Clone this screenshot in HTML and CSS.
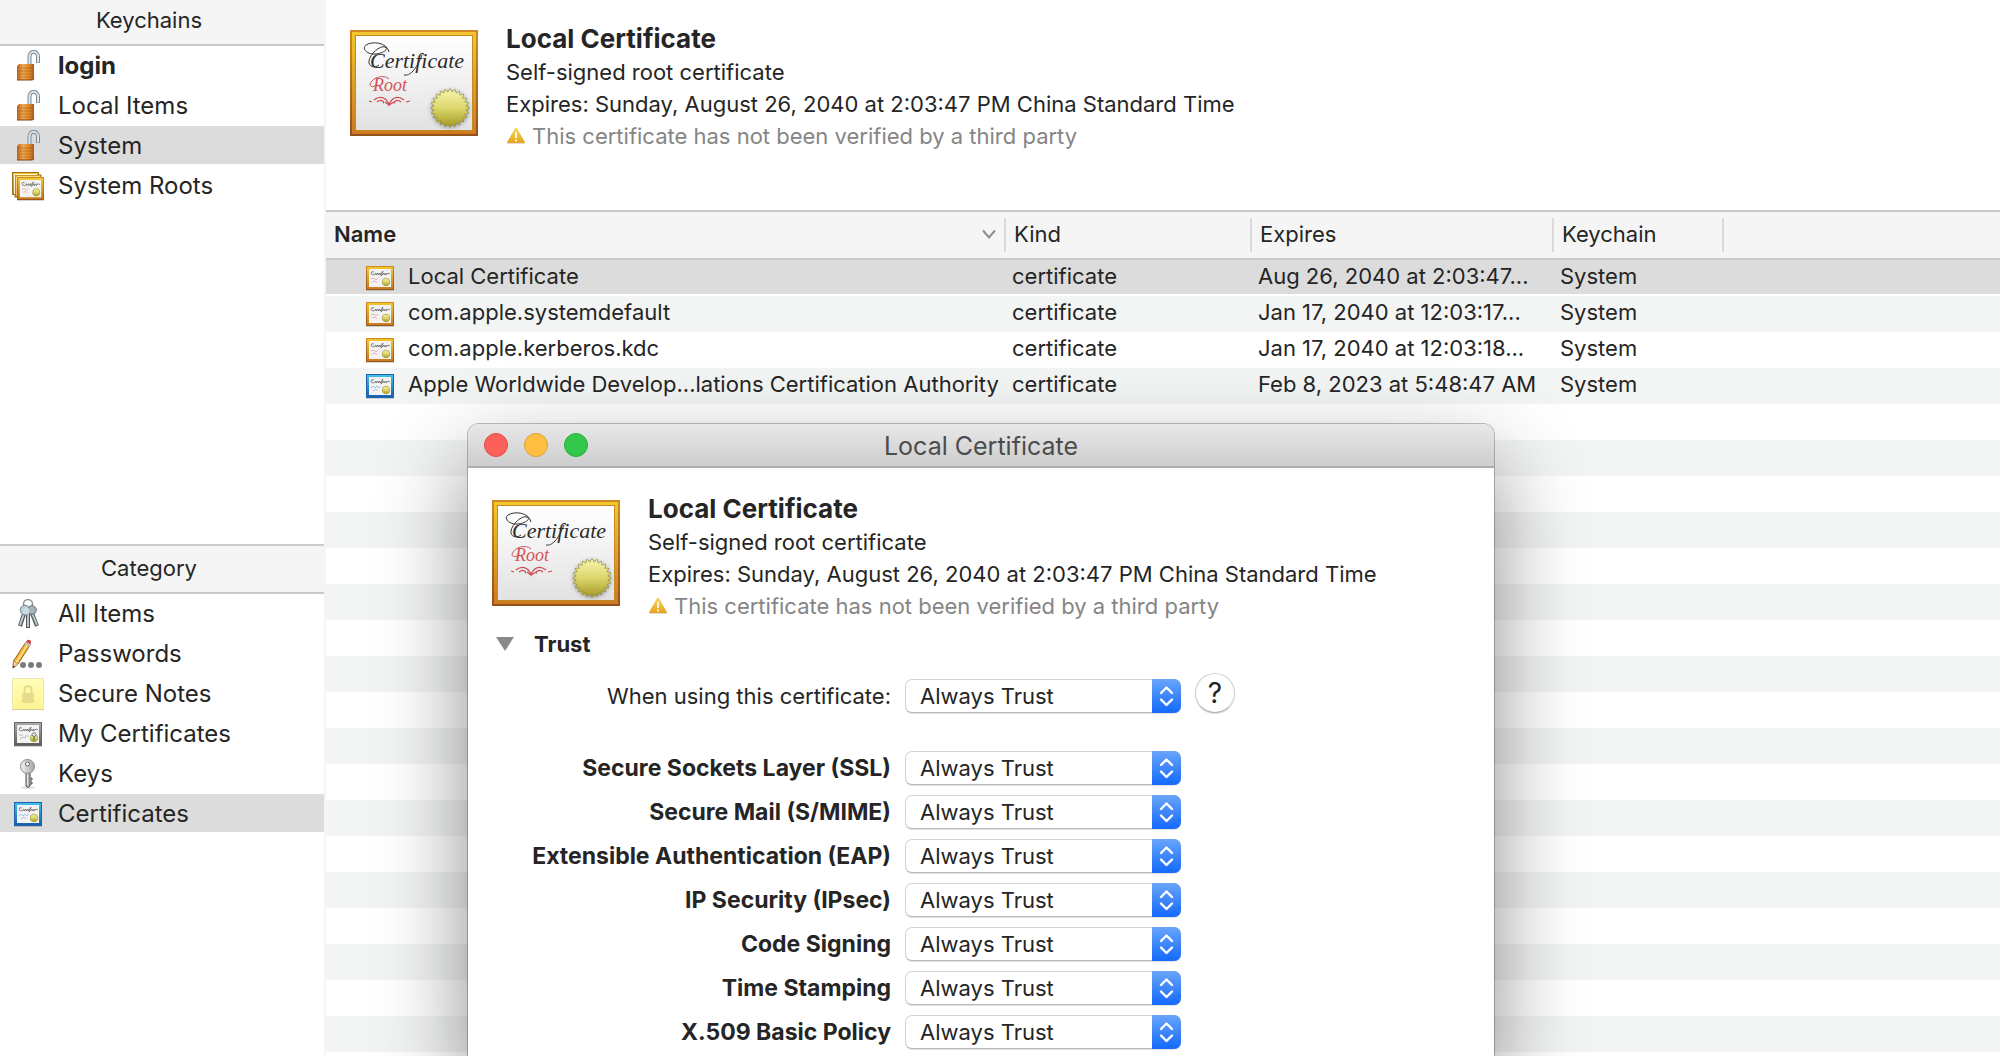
FILE: index.html
```html
<!DOCTYPE html>
<html lang="en">
<head>
<meta charset="utf-8">
<title>Keychain Access</title>
<link rel="stylesheet" href="styles.css">
</head>
<body>
<svg class="defs" aria-hidden="true">
  <defs>
    <linearGradient id="gold" x1="0" y1="0" x2="0" y2="1"><stop offset="0" stop-color="#f2c72e"/><stop offset="1" stop-color="#cc7a20"/></linearGradient>
    <linearGradient id="gold-edge" x1="0" y1="0" x2="0" y2="1"><stop offset="0" stop-color="#d08a20"/><stop offset="1" stop-color="#96501a"/></linearGradient>
    <linearGradient id="blue" x1="0" y1="0" x2="0" y2="1"><stop offset="0" stop-color="#3fc0ea"/><stop offset="1" stop-color="#1a5fb0"/></linearGradient>
    <linearGradient id="grey" x1="0" y1="0" x2="0" y2="1"><stop offset="0" stop-color="#a8a8a8"/><stop offset="1" stop-color="#5e5e5e"/></linearGradient>
    <linearGradient id="paper" x1="0" y1="0" x2="0" y2="1"><stop offset="0" stop-color="#ffffff"/><stop offset="1" stop-color="#e2e2e2"/></linearGradient>
    <linearGradient id="seal" x1="0" y1="0" x2="0" y2="1"><stop offset="0" stop-color="#f8f6ae"/><stop offset=".5" stop-color="#dcd66c"/><stop offset="1" stop-color="#a39a22"/></linearGradient>
    <linearGradient id="brass" x1="0" y1="0" x2="1" y2="0"><stop offset="0" stop-color="#b8651c"/><stop offset=".35" stop-color="#f0a950"/><stop offset=".75" stop-color="#d98526"/><stop offset="1" stop-color="#a65a18"/></linearGradient>
    <linearGradient id="amber" x1="0" y1="0" x2="0" y2="1"><stop offset="0" stop-color="#f8dc5c"/><stop offset="1" stop-color="#e8a01c"/></linearGradient>
    <linearGradient id="note" x1="0" y1="0" x2="0" y2="1"><stop offset="0" stop-color="#fffdb8"/><stop offset="1" stop-color="#fdf491"/></linearGradient>
    <linearGradient id="steel" x1="0" y1="0" x2="1" y2="0"><stop offset="0" stop-color="#f4f4f4"/><stop offset="1" stop-color="#a2a6a8"/></linearGradient>
    <clipPath id="star">
      <path d="M0 -20L17.300 10H-17.300Z"/>
      <path d="M0 -20L17.300 10H-17.300Z" transform="rotate(15)"/>
      <path d="M0 -20L17.300 10H-17.300Z" transform="rotate(30)"/>
      <path d="M0 -20L17.300 10H-17.300Z" transform="rotate(45)"/>
      <path d="M0 -20L17.300 10H-17.300Z" transform="rotate(60)"/>
      <path d="M0 -20L17.300 10H-17.300Z" transform="rotate(75)"/>
      <path d="M0 -20L17.300 10H-17.300Z" transform="rotate(90)"/>
      <path d="M0 -20L17.300 10H-17.300Z" transform="rotate(105)"/>
    </clipPath>
    <symbol id="certificate" viewBox="0 0 128 106">
      <rect width="128" height="106" fill="url(#gold-edge)"/>
      <rect x="2" y="2" width="124" height="102" fill="url(#gold)"/>
      <rect x="5" y="5" width="118" height="96" fill="#c68a22"/>
      <rect x="6" y="6" width="116" height="94" fill="url(#paper)"/>
      <text x="20" y="38" class="script">Certificate</text>
      <path d="M39 22C37 12 22 11 16 15C11 19 18 25 26 24C34 23 39 19 35 17C30 15 20 24 19 31C18 36 24 39 29 35M54 45C60 46 66 40 72 25" fill="none" stroke="#333" stroke-width="1"/>
      <text x="23" y="61" class="script script-root">Root</text>
      <path d="M39 49C34 44 23 47 20 54C20 58 25 57 27 54" fill="none" stroke="#d2545a" stroke-width="1"/>
      <path d="M24 70C29 66 36 66 39 75C42 66 49 66 54 70M27 72C32 68 35 73 33 73M51 72C46 68 43 73 45 73M35 72L39 75L44 72M19 71L22 72M56 72L60 71" fill="none" stroke="#cf4a50" stroke-width="1.2"/>
      <g class="seal-shadow"><g transform="translate(100 78)"><rect x="-20" y="-20" width="40" height="40" fill="#8f8a2c" clip-path="url(#star)"/><g transform="scale(.95)"><rect x="-20" y="-20" width="40" height="40" fill="url(#seal)" clip-path="url(#star)"/></g></g></g>
    </symbol>
    <symbol id="face" viewBox="0 0 28 24">
      <rect x="3" y="3" width="22" height="18" fill="#f3f3f3"/>
      <path d="M8 6Q5 5 5 7T8 9L10 7L10 9L12 7V9L14 7V9L17 5L15 10L18 7V9L20 7V9L22 7L24 8" fill="none" stroke="#666" stroke-width=".8"/>
    </symbol>
    <symbol id="cert-gold" viewBox="0 0 28 25">
      <rect y="23" width="28" height="2" fill="#000" opacity=".15"/>
      <rect width="28" height="24" fill="url(#gold-edge)"/><rect x="1" y="1" width="26" height="22" fill="url(#gold)"/>
      <use href="#face" width="28" height="24"/>
      <path d="M5 13L8 12L10 14L12 12M6 16L9 15L11 17" fill="none" stroke="#eeb0b0" stroke-width="1"/>
      <circle cx="20" cy="16" r="3.8" fill="url(#seal)" stroke="#aba23a" stroke-width=".8"/>
    </symbol>
    <symbol id="cert-blue" viewBox="0 0 28 25">
      <rect y="23" width="28" height="2" fill="#000" opacity=".15"/>
      <rect width="28" height="24" fill="#1b64ad"/><rect x="1" y="1" width="26" height="22" fill="url(#blue)"/>
      <use href="#face" width="28" height="24"/>
      <path d="M5 14L7 12L9 14L11 12L13 14L15 12M7 17L10 15L12 17" fill="none" stroke="#9cc4e6" stroke-width="1"/>
      <circle cx="20" cy="16" r="3.8" fill="url(#seal)" stroke="#aba23a" stroke-width=".8"/>
    </symbol>
    <symbol id="cert-grey" viewBox="0 0 28 25">
      <rect y="23" width="28" height="2" fill="#000" opacity=".15"/>
      <rect width="28" height="24" fill="#666"/><rect x="1" y="1" width="26" height="22" fill="url(#grey)"/>
      <use href="#face" width="28" height="24"/>
      <path d="M5 13H9M11 14H15M6 17L9 15L12 16" fill="none" stroke="#bbb" stroke-width="1"/>
      <circle cx="20" cy="16" r="3.8" fill="url(#seal)" stroke="#aba23a" stroke-width=".8"/>
      <circle cx="20" cy="12.500" r="2" fill="#ddd" stroke="#777" stroke-width=".8"/><path d="M20 14V18.500" stroke="#777" stroke-width="1.500"/>
    </symbol>
    <symbol id="padlock" viewBox="0 0 32 32">
      <path d="M17.500 15V7C17.500 0 26 0 26 7V13" fill="none" stroke="#7d8b95" stroke-width="4"/>
      <path d="M17.500 15V7C17.500 0 26 0 26 7V12.500" fill="none" stroke="#dce5ea" stroke-width="2"/>
      <path d="M5 16L7 14H22V29L20 30L5 30Z" fill="url(#brass)"/>
      <path d="M5 18H22M5 21H22M5 24H22M5 27H22" stroke="#a85d17" stroke-width="1" opacity=".55"/>
      <path d="M5 30H20L22 29" fill="none" stroke="#7d4310" stroke-width="1"/>
    </symbol>
    <symbol id="warning" viewBox="0 0 20 18">
      <path d="M9 1.500Q10 0 11 1.500L19 15.500Q19 17 18 17H2Q1 17 1 15.500Z" fill="#b9b9b9" opacity=".5"/>
      <path d="M9 1.500Q10 0 11 1.500L18.500 14.500Q19 16 18 16H2Q1 16 1.500 14.500Z" fill="url(#amber)"/>
      <path d="M10 5V11M10 12.500V14.500" stroke="#fff8d8" stroke-width="2"/>
    </symbol>
    <symbol id="updown" viewBox="0 0 29 34">
      <path d="M9 14L14.500 8.500L20 14M9 20.500L14.500 26L20 20.500" fill="none" stroke="#fff" stroke-width="2.400" stroke-linecap="round" stroke-linejoin="round"/>
    </symbol>
  </defs>
</svg>

<div class="app">
  <aside class="sidebar">
    <section class="keychains">
      <h2 class="side-head">Keychains</h2>
      <ul>
        <li><a href="#login" class="bold"><svg class="ico"><use href="#padlock"/></svg>login</a></li>
        <li><a href="#local"><svg class="ico"><use href="#padlock"/></svg>Local Items</a></li>
        <li><a href="#system" class="selected" aria-current="true"><svg class="ico"><use href="#padlock"/></svg>System</a></li>
        <li><a href="#roots"><svg class="ico" viewBox="0 0 32 32">
          <g fill="url(#gold)" stroke="#a0701c"><rect x=".5" y="2.500" width="26" height="22"/><rect x="3" y="5" width="26" height="22"/></g>
          <path d="M2.500 24V4.500H25M5 26V7H28" fill="none" stroke="#fff4d0"/>
          <use href="#cert-gold" x="5" y="7" width="27" height="24"/></svg>System Roots</a></li>
      </ul>
    </section>
    <section class="category">
      <h2 class="side-head">Category</h2>
      <ul>
        <li><a href="#all"><svg class="ico" viewBox="0 0 32 32">
          <circle cx="16" cy="6" r="4.500" fill="none" stroke="#8d9295" stroke-width="1.500"/>
          <g stroke="#50575a" stroke-width="4"><path d="M13 13L8 28M19 13L25 28M16 14V30"/></g>
          <g stroke="#c9d1d4" stroke-width="1.800"><path d="M13 13L8 27M19 13L25 27M16 14V29"/></g>
          <circle cx="13" cy="12" r="4.800" fill="#b9cdd5" stroke="#758891"/><circle cx="20" cy="12" r="4.300" fill="#a4b4bb" stroke="#68777e"/><circle cx="14" cy="13" r="3.500" fill="#cbdbe1"/>
        </svg>All Items</a></li>
        <li><a href="#passwords"><svg class="ico" viewBox="0 0 32 32">
          <path d="M14 4L18.500 6.500L6 26L1 30L1.500 23Z" fill="#f5b533" stroke="#93661c"/><path d="M15.500 6.500L4 25" stroke="#ffe08a" stroke-width="1.500"/>
          <path d="M1.500 23L6 26L1 30Z" fill="#f3d3a8" stroke="#a27a48" stroke-width=".6"/><path d="M.5 30.500L1.500 27.500L3 28.500Z" fill="#333"/>
          <path d="M12.500 6L17.500 9L18.800 6.500L14 3.500Z" fill="#bcc3c7"/><path d="M14 3.500Q16 .5 18.500 2.500Q19.500 4 18.500 6.200Z" fill="#d93d38"/>
          <circle cx="11" cy="27" r="3" fill="#7c7c7c"/><circle cx="19" cy="27" r="3" fill="#7c7c7c"/><circle cx="27" cy="27" r="3" fill="#7c7c7c"/>
        </svg>Passwords</a></li>
        <li><a href="#notes"><svg class="ico" viewBox="0 0 32 32">
          <rect x=".5" y=".5" width="31" height="31" fill="url(#note)" stroke="#ebe6b4"/><path d="M0 31.500H32" stroke="#d9d19a"/>
          <rect x="10" y="15" width="12" height="10" rx="1" fill="#e6dc8c"/><path d="M12.500 15V12C12.500 7 19.500 7 19.500 12V15" fill="none" stroke="#e6dc8c" stroke-width="2"/>
        </svg>Secure Notes</a></li>
        <li><a href="#mine"><svg class="ico" viewBox="0 0 32 32"><use href="#cert-grey" x="2" y="4" width="28" height="25"/></svg>My Certificates</a></li>
        <li><a href="#keys"><svg class="ico" viewBox="0 0 32 32">
          <ellipse cx="16" cy="29.500" rx="7" ry="1.500" fill="#000" opacity=".12"/>
          <path d="M14 14H18V28L16 29.500L14 28Z" fill="#b5b5b5" stroke="#555"/><path d="M18 20H20V22H18M18 24H20V26H18" fill="#ccc" stroke="#555"/>
          <circle cx="15.500" cy="8.500" r="7" fill="url(#steel)" stroke="#888"/><circle cx="15.500" cy="6" r="2" fill="#fff" stroke="#666"/>
          <path d="M15.500 16V27" stroke="#eee"/>
        </svg>Keys</a></li>
        <li><a href="#certificates" class="selected" aria-current="true"><svg class="ico" viewBox="0 0 32 32"><use href="#cert-blue" x="2" y="4" width="28" height="25"/></svg>Certificates</a></li>
      </ul>
    </section>
  </aside>

  <main class="main">
    <header class="info">
      <svg class="cert" role="img" aria-label="Root certificate"><use href="#certificate"/></svg>
      <div class="info-text">
        <h1>Local Certificate</h1>
        <p>Self-signed root certificate</p>
        <p>Expires: Sunday, August 26, 2040 at 2:03:47 PM China Standard Time</p>
        <p class="unverified"><svg class="warn"><use href="#warning"/></svg>This certificate has not been verified by a third party</p>
      </div>
    </header>
    <div class="list">
      <table>
        <colgroup><col class="c-name"><col class="c-kind"><col class="c-exp"><col class="c-key"><col></colgroup>
        <thead>
          <tr>
            <th><div class="sorted">Name<svg class="chevron" viewBox="0 0 14 10"><path d="M1 1.500L7 8.500L13 1.500" fill="none" stroke="#8e8e8e" stroke-width="2"/></svg></div></th>
            <th><div>Kind</div></th><th><div>Expires</div></th><th><div>Keychain</div></th><th></th>
          </tr>
        </thead>
        <tbody>
          <tr class="selected"><td class="name"><svg class="mini"><use href="#cert-gold"/></svg>Local Certificate</td><td>certificate</td><td>Aug 26, 2040 at 2:03:47...</td><td>System</td><td></td></tr>
          <tr><td class="name"><svg class="mini"><use href="#cert-gold"/></svg>com.apple.systemdefault</td><td>certificate</td><td>Jan 17, 2040 at 12:03:17...</td><td>System</td><td></td></tr>
          <tr><td class="name"><svg class="mini"><use href="#cert-gold"/></svg>com.apple.kerberos.kdc</td><td>certificate</td><td>Jan 17, 2040 at 12:03:18...</td><td>System</td><td></td></tr>
          <tr><td class="name"><svg class="mini"><use href="#cert-blue"/></svg>Apple Worldwide Develop...lations Certification Authority</td><td>certificate</td><td>Feb 8, 2023 at 5:48:47 AM</td><td>System</td><td></td></tr>
        </tbody>
      </table>
    </div>
  </main>
</div>

<section class="dialog" role="dialog" aria-labelledby="dialog-title">
  <header class="titlebar">
    <div class="lights"><button class="light close" aria-label="Close"></button><button class="light minimize" aria-label="Minimize"></button><button class="light zoom" aria-label="Zoom"></button></div>
    <h2 id="dialog-title">Local Certificate</h2>
  </header>
  <div class="dialog-body">
    <div class="info">
      <svg class="cert" role="img" aria-label="Root certificate"><use href="#certificate"/></svg>
      <div class="info-text">
        <h1>Local Certificate</h1>
        <p>Self-signed root certificate</p>
        <p>Expires: Sunday, August 26, 2040 at 2:03:47 PM China Standard Time</p>
        <p class="unverified"><svg class="warn"><use href="#warning"/></svg>This certificate has not been verified by a third party</p>
      </div>
    </div>
    <button class="trust" aria-expanded="true"><svg class="triangle" viewBox="0 0 18 14"><path d="M0 0H18L9 14Z" fill="#8a8a8a"/></svg>Trust</button>
    <form class="policies">
      <div class="row overall"><label for="p0">When using this certificate:</label><span class="popup"><select id="p0"><option>Always Trust</option></select><svg class="knob"><use href="#updown"/></svg></span><button type="button" class="help" aria-label="Help">?</button></div>
      <div class="row"><label for="p1">Secure Sockets Layer (SSL)</label><span class="popup"><select id="p1"><option>Always Trust</option></select><svg class="knob"><use href="#updown"/></svg></span></div>
      <div class="row"><label for="p2">Secure Mail (S/MIME)</label><span class="popup"><select id="p2"><option>Always Trust</option></select><svg class="knob"><use href="#updown"/></svg></span></div>
      <div class="row"><label for="p3">Extensible Authentication (EAP)</label><span class="popup"><select id="p3"><option>Always Trust</option></select><svg class="knob"><use href="#updown"/></svg></span></div>
      <div class="row"><label for="p4">IP Security (IPsec)</label><span class="popup"><select id="p4"><option>Always Trust</option></select><svg class="knob"><use href="#updown"/></svg></span></div>
      <div class="row"><label for="p5">Code Signing</label><span class="popup"><select id="p5"><option>Always Trust</option></select><svg class="knob"><use href="#updown"/></svg></span></div>
      <div class="row"><label for="p6">Time Stamping</label><span class="popup"><select id="p6"><option>Always Trust</option></select><svg class="knob"><use href="#updown"/></svg></span></div>
      <div class="row"><label for="p7">X.509 Basic Policy</label><span class="popup"><select id="p7"><option>Always Trust</option></select><svg class="knob"><use href="#updown"/></svg></span></div>
    </form>
  </div>
</section>
</body>
</html>
```
FILE: styles.css
```css
* { box-sizing: border-box; }

body {
  margin: 0;
  position: relative;
  height: 100vh;
  overflow: hidden;
  background: #fff;
  color: #252525;
  font: 22px/32px Inter, "Liberation Sans", sans-serif;
}

h1, h2, p, ul { margin: 0; padding: 0; }
ul { list-style: none; }
svg { flex: none; }
button, select { font: inherit; color: inherit; }

.defs { position: absolute; width: 0; height: 0; }

.app { display: flex; height: 100%; }

/* Sidebar */
.sidebar {
  flex: none;
  width: 326px;
  border-right: 2px solid #f5f5f5;
  display: flex;
  flex-direction: column;
}
.keychains { flex: 0 0 544px; }
.category { border-top: 2px solid #c9c9c9; }
.side-head {
  height: 46px;
  padding-right: 26px;
  border-bottom: 2px solid #c9c9c9;
  background: #f5f5f5;
  font-size: 22px;
  font-weight: 400;
  line-height: 40px;
  text-align: center;
}
.category .side-head { height: 48px; line-height: 44px; }
.sidebar a {
  display: flex;
  align-items: center;
  gap: 14px;
  height: 38px;
  margin-bottom: 2px;
  padding: 2px 0 0 12px;
  font-size: 24px;
  color: inherit;
  text-decoration: none;
}
.sidebar a.bold { font-weight: 700; }
.ico { width: 32px; height: 32px; }
.selected { background: #dcdcdc; }

/* Certificate summary */
.main { flex: 1; min-width: 0; display: flex; flex-direction: column; }
.info { display: flex; gap: 28px; }
.main > .info { flex: 0 0 210px; padding: 20px 24px 0; }
.cert { width: 128px; height: 106px; margin-top: 10px; }
.script { font: italic 22px "Liberation Serif", serif; fill: #2c2c2c; }
.script-root { font-size: 18px; fill: #d2545a; }
.seal-shadow { filter: drop-shadow(0 1px 2px rgba(0, 0, 0, .4)); }
.info-text { white-space: nowrap; }
h1 { height: 36px; font-size: 26px; font-weight: 700; line-height: 38px; }
.unverified { display: flex; align-items: center; gap: 6px; color: #858585; }
.warn { width: 20px; height: 18px; }

/* Item list */
.list {
  flex: 1;
  border-top: 2px solid #c9c9c9;
  background: linear-gradient(#fff 50%, #f3f5f4 50%) 0 48px / 100% 72px;
}
table { width: 100%; table-layout: fixed; border-collapse: separate; border-spacing: 0; white-space: nowrap; }
.c-name { width: 680px; }
.c-kind { width: 246px; }
.c-exp { width: 302px; }
.c-key { width: 170px; }
th {
  height: 48px;
  padding: 0;
  border-bottom: 2px solid #c9c9c9;
  background: #f5f5f5;
  font-weight: 400;
  text-align: left;
}
th div {
  display: flex;
  align-items: center;
  justify-content: space-between;
  height: 34px;
  padding: 0 8px 2px;
  border-right: 2px solid #d9d9d9;
}
.sorted { font-weight: 600; }
.chevron { width: 14px; height: 10px; }
td {
  height: 36px;
  padding: 0 0 2px 6px;
  border-bottom: 2px solid transparent;
  background-clip: padding-box;
  line-height: 30px;
}
tr.selected { background: none; }
tr.selected td { background-color: #dcdcdc; }
.name { padding-left: 40px; }
.mini { width: 28px; height: 25px; margin-right: 14px; vertical-align: middle; }

/* Trust settings window */
.dialog {
  position: absolute;
  left: 468px;
  top: 424px;
  bottom: 0;
  width: 1026px;
  border-radius: 11px 11px 0 0;
  background: #fff;
  box-shadow: 0 0 0 1px rgba(0, 0, 0, .25), 0 38px 90px rgba(0, 0, 0, .45);
}
.titlebar {
  display: flex;
  align-items: center;
  height: 44px;
  padding: 0 16px;
  border-bottom: 2px solid #adadad;
  border-radius: 11px 11px 0 0;
  background: linear-gradient(#e8e8e8, #cdcdcd);
}
.titlebar h2 { flex: 1; padding: 2px 104px 0 0; text-align: center; font-size: 25px; font-weight: 400; color: #4c4c4c; }
.lights { display: flex; gap: 16px; }
.light { width: 24px; height: 24px; padding: 0; border: 1px solid; border-radius: 50%; }
.close { background: #fc605b; border-color: #e14c47; }
.minimize { background: #fdbe41; border-color: #dfa033; }
.zoom { background: #34c84a; border-color: #28ae3b; }
.dialog-body { padding: 22px 24px 0; }
.dialog-body > .info { height: 132px; }
.trust {
  display: flex;
  align-items: center;
  gap: 20px;
  height: 44px;
  padding: 0 4px;
  border: 0;
  background: none;
  font-weight: 700;
}
.triangle { width: 18px; height: 14px; }
.policies { display: flex; flex-direction: column; gap: 10px; padding-top: 7px; }
.row { display: flex; align-items: flex-end; gap: 14px; }
.row label { width: 399px; font-size: 23px; line-height: 34px; text-align: right; white-space: nowrap; font-weight: 700; }
.overall { margin-bottom: 28px; }
.row.overall label { font-size: 22px; font-weight: 400; }
.popup { position: relative; display: flex; width: 276px; height: 34px; }
.popup select {
  width: 100%;
  height: 34px;
  padding: 0 40px 0 14px;
  appearance: none;
  border: 1px solid #d4d4d4;
  border-bottom-color: #b8b8b8;
  border-radius: 7px;
  background: #fff;
  box-shadow: 0 1px 1px rgba(0, 0, 0, .12);
}
.knob {
  position: absolute;
  right: 0;
  top: 0;
  width: 29px;
  height: 34px;
  border-radius: 0 7px 7px 0;
  background: linear-gradient(#6aa5f8, #1369fd);
  pointer-events: none;
}
.help {
  width: 40px;
  height: 40px;
  padding: 0;
  border: 1px solid #d0d0d0;
  border-bottom-color: #b4b4b4;
  border-radius: 50%;
  background: #fff;
  box-shadow: 0 1px 1px rgba(0, 0, 0, .15);
  font-size: 28px;
}
```
